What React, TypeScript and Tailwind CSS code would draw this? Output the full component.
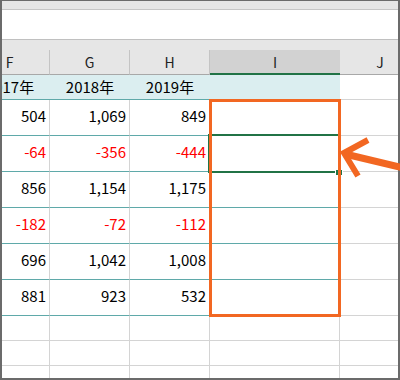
import React from 'react'

const data = [
  [504, 1069, 849],
  [-64, -356, -444],
  [856, 1154, 1175],
  [-182, -72, -112],
  [696, 1042, 1008],
  [881, 923, 532],
]

const fmt = (n: number) => n.toLocaleString('en-US')

/** 列見出し（F〜J） */
function HeaderRow() {
  return (
    <div className="flex h-[25px] text-[14px] text-[#222]">
      <div className="ml-[-32px] w-[80px] shrink-0 flex items-center justify-center border-r border-b border-r-[#c4c4c4] border-b-[#a8a8a8]">F</div>
      <div className="w-[80px] shrink-0 flex items-center justify-center border-r border-b border-r-[#c4c4c4] border-b-[#a8a8a8]">G</div>
      <div className="w-[80px] shrink-0 flex items-center justify-center border-r border-b border-r-[#c4c4c4] border-b-[#a8a8a8]">H</div>
      <div className="w-[130px] shrink-0 flex items-center justify-center bg-[#d2d2d2] border-b-2 border-[#217346] pt-[1px]">I</div>
      <div className="w-[80px] shrink-0 flex items-center justify-center border-b border-[#a8a8a8]">J</div>
    </div>
  )
}

/** 年の見出し行（水色） */
function YearRow() {
  return (
    <div className="flex h-[25px] text-[15px] text-black">
      <div className="ml-[-32px] w-[80px] shrink-0 flex items-center justify-center bg-[#dbeef0] border-b border-[#5fa9a9]">2017年</div>
      <div className="w-[80px] shrink-0 flex items-center justify-center bg-[#dbeef0] border-b border-[#5fa9a9]">2018年</div>
      <div className="w-[80px] shrink-0 flex items-center justify-center bg-[#dbeef0] border-b border-[#5fa9a9]">2019年</div>
      <div className="w-[130px] shrink-0 bg-[#dbeef0] border-b border-[#5fa9a9]" />
      <div className="w-[80px] shrink-0 border-b border-[#d4d4d4]" />
    </div>
  )
}

function DataRow({ values }: { values: number[] }) {
  return (
    <div className="flex h-[36px] text-[15px]">
      {values.map((v, i) => (
        <div
          key={i}
          className={`${i === 0 ? 'ml-[-32px] ' : ''}w-[80px] shrink-0 flex items-center justify-end pr-[3px] pb-[3px] border-r border-b border-r-[#d4d4d4] border-b-[#5fa9a9] ${
            v < 0 ? 'text-[#ff0000]' : 'text-black'
          }`}
        >
          {fmt(v)}
        </div>
      ))}
      <div className="w-[130px] shrink-0 border-r border-b border-r-[#d4d4d4] border-b-[#5fa9a9]" />
      <div className="w-[80px] shrink-0 border-b border-[#d4d4d4]" />
    </div>
  )
}

function EmptyRow({ last = false }: { last?: boolean }) {
  return (
    <div className={`flex ${last ? 'flex-1' : 'h-[25px]'}`}>
      <div className={`ml-[-32px] w-[80px] shrink-0 border-r border-[#d4d4d4] ${last ? '' : 'border-b'}`} />
      <div className={`w-[80px] shrink-0 border-r border-[#d4d4d4] ${last ? '' : 'border-b'}`} />
      <div className={`w-[80px] shrink-0 border-r border-[#d4d4d4] ${last ? '' : 'border-b'}`} />
      <div className={`w-[130px] shrink-0 border-r border-[#d4d4d4] ${last ? '' : 'border-b'}`} />
      <div className={`w-[80px] shrink-0 border-[#d4d4d4] ${last ? '' : 'border-b'}`} />
    </div>
  )
}

export default function App() {
  return (
    <div className="relative w-[400px] h-[380px] overflow-hidden bg-white font-['Noto_Sans_CJK_JP','Noto_Sans',sans-serif]">
      <div className="flex flex-col h-full overflow-hidden border-x-2 border-t border-b-2 border-[#6b6b6b]">
        {/* 上部のバー */}
        <div className="h-[9px] shrink-0 bg-[#e6e6e6] border-b border-[#c6c6c6]" />
        <div className="h-[30px] shrink-0 bg-white border-b border-[#c0c0c0]" />
        <div className="h-[10px] shrink-0 bg-[#e6e6e6]" />

        <div className="bg-[#e6e6e6]">
          <HeaderRow />
        </div>
        <YearRow />
        {data.map((r, i) => (
          <DataRow key={i} values={r} />
        ))}
        <EmptyRow />
        <EmptyRow />
        <EmptyRow last />
      </div>

      {/* 選択セル */}
      <div className="absolute left-[208px] top-[134px] w-[132px] h-[39px] border-2 border-[#217346]" />
      <div className="absolute left-[336px] top-[170px] w-[6px] h-[5px] bg-[#217346] outline outline-1 outline-white" />

      {/* オレンジ枠 */}
      <div className="absolute left-[209px] top-[99px] w-[132px] h-[218px] border-[3px] border-[#f26722]" />

      {/* 矢印 */}
      <svg className="absolute left-0 top-0" width="400" height="380" viewBox="0 0 400 380">
        <line x1="345" y1="154" x2="404" y2="168" stroke="#f26722" strokeWidth="7" />
        <polyline points="368,140 344,153 358,176" fill="none" stroke="#f26722" strokeWidth="6" strokeLinejoin="miter" />
      </svg>
    </div>
  )
}
